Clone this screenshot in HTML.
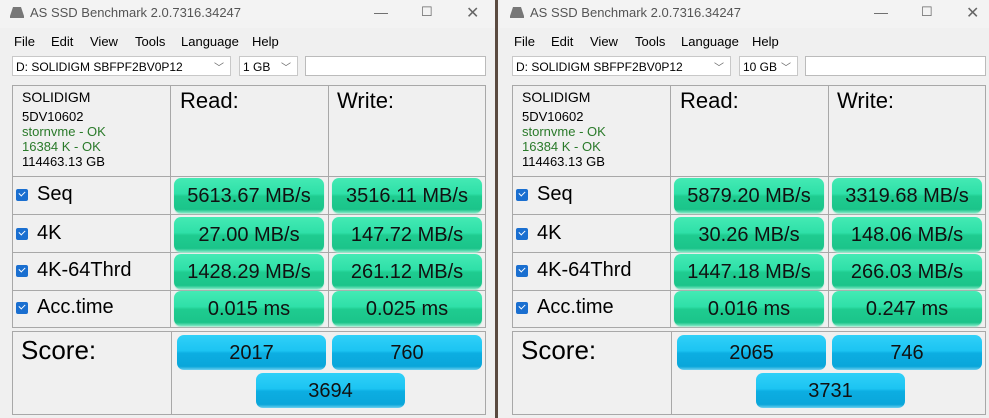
<!DOCTYPE html>
<html><head><meta charset="utf-8"><style>
*{margin:0;padding:0;box-sizing:border-box}
body{width:989px;height:418px;overflow:hidden;background:#f0f0f0;font-family:"Liberation Sans",Arial,sans-serif;position:relative}
.win{position:absolute;top:0;height:418px;background:#f0f0f0;overflow:hidden}
.sep{position:absolute;left:495px;top:0;width:3px;height:418px;background:#5a4a40}
.title{position:absolute;left:0;top:0;width:100%;height:28px;background:#f3f3f3;font-size:13px;color:#555}
.title .t{position:absolute;left:30px;top:5px}
.icon{position:absolute;left:10px;top:7px;width:14px;height:11px}
.ctl{position:absolute;top:4px;font-size:14px;color:#666}
.menu{position:absolute;left:0;top:29px;height:24px;width:100%;font-size:13px;color:#000}
.menu span{position:absolute;top:5px}
.combo{position:absolute;top:56px;height:20px;background:#fff;border:1px solid #c8c8c8;font-size:12px;padding:3px 0 0 3px}
.combo .a{position:absolute;right:6px;top:2px;font-size:10px;color:#666}
.line{position:absolute;background:#a8a8a8}
.lbl{position:absolute;font-size:20px;color:#000}
.cb{position:absolute;width:12px;height:12px;background:#1a6fd0;border-radius:2px}
.cb:after{content:"";position:absolute;left:3px;top:2px;width:5px;height:3px;border-left:1.5px solid #fff;border-bottom:1.5px solid #fff;transform:rotate(-45deg)}
.g{position:absolute;height:35px;border-radius:7px;background:linear-gradient(#44eab4 0%,#2fe0a8 45%,#1fcc90 52%,#1bc48a 90%,#7de8c4 100%);font-size:20px;text-align:center;line-height:36px;color:#111;box-shadow:0 1px 1px #9fe8cc}
.b{position:absolute;height:35px;border-radius:7px;background:linear-gradient(#30d0f8 0%,#1cc4f2 45%,#0caee2 52%,#0aa6da 90%,#6cd0f0 100%);font-size:20px;text-align:center;line-height:36px;color:#111}
.info{position:absolute;font-size:13px;line-height:14.5px}
</style></head><body>

<div class="win" style="left:0;width:495px">
<div class="title"><svg class="icon" viewBox="0 0 14 11"><path d="M3 0h8l3 9v2H0V9z" fill="#777"/></svg><span class="t">AS SSD Benchmark 2.0.7316.34247</span>
<span class="ctl" style="left:374px">—</span><span class="ctl" style="left:421px;font-size:13px">☐</span><span class="ctl" style="left:466px;font-size:16px;top:3px">✕</span></div>
<div class="menu"><span style="left:14px">File</span><span style="left:51px">Edit</span><span style="left:90px">View</span><span style="left:135px">Tools</span><span style="left:181px">Language</span><span style="left:252px">Help</span></div>
<div class="combo" style="left:12px;width:219px">D: SOLIDIGM SBFPF2BV0P12<span class="a">﹀</span></div>
<div class="combo" style="left:239px;width:59px">1 GB<span class="a">﹀</span></div>
<div class="combo" style="left:305px;width:181px;border-color:#bbb"></div>
<div class="line" style="left:12px;top:85px;width:474px;height:1px"></div>
<div class="line" style="left:12px;top:85px;width:1px;height:243px"></div>
<div class="line" style="left:485px;top:85px;width:1px;height:243px"></div>
<div class="line" style="left:170px;top:85px;width:1px;height:243px"></div>
<div class="line" style="left:328px;top:85px;width:1px;height:243px"></div>
<div class="line" style="left:12px;top:176px;width:474px;height:1px"></div>
<div class="line" style="left:12px;top:214px;width:474px;height:1px"></div>
<div class="line" style="left:12px;top:252px;width:474px;height:1px"></div>
<div class="line" style="left:12px;top:290px;width:474px;height:1px"></div>
<div class="line" style="left:12px;top:327px;width:474px;height:1px"></div>
<div class="line" style="left:12px;top:331px;width:474px;height:1px"></div>
<div class="line" style="left:12px;top:331px;width:1px;height:84px"></div>
<div class="line" style="left:485px;top:331px;width:1px;height:84px"></div>
<div class="line" style="left:171px;top:331px;width:1px;height:84px"></div>
<div class="line" style="left:12px;top:414px;width:474px;height:1px"></div>
<div class="info" style="left:22px;top:90px;font-size:14px">SOLIDIGM</div>
<div class="info" style="left:22px;top:110px">5DV10602</div>
<div class="info" style="left:22px;top:125px;color:#2a7a2a">stornvme - OK</div>
<div class="info" style="left:22px;top:140px;color:#2a7a2a">16384 K - OK</div>
<div class="info" style="left:22px;top:155px">114463.13 GB</div>
<div class="lbl" style="left:180px;top:88px;font-size:22px">Read:</div>
<div class="lbl" style="left:337px;top:88px;font-size:22px">Write:</div>
<div class="cb" style="left:16px;top:189px"></div><div class="lbl" style="left:37px;top:183px">Seq</div>
<div class="cb" style="left:16px;top:228px"></div><div class="lbl" style="left:37px;top:222px">4K</div>
<div class="cb" style="left:16px;top:265px"></div><div class="lbl" style="left:37px;top:259px">4K-64Thrd</div>
<div class="cb" style="left:16px;top:302px"></div><div class="lbl" style="left:37px;top:296px">Acc.time</div>
<div class="g" style="left:174px;top:178px;width:150px">5613.67 MB/s</div>
<div class="g" style="left:332px;top:178px;width:150px">3516.11 MB/s</div>
<div class="g" style="left:174px;top:217px;width:150px">27.00 MB/s</div>
<div class="g" style="left:332px;top:217px;width:150px">147.72 MB/s</div>
<div class="g" style="left:174px;top:254px;width:150px">1428.29 MB/s</div>
<div class="g" style="left:332px;top:254px;width:150px">261.12 MB/s</div>
<div class="g" style="left:174px;top:291px;width:150px">0.015 ms</div>
<div class="g" style="left:332px;top:291px;width:150px">0.025 ms</div>
<div class="lbl" style="left:21px;top:335px;font-size:26px">Score:</div>
<div class="b" style="left:177px;top:335px;width:149px">2017</div>
<div class="b" style="left:332px;top:335px;width:150px">760</div>
<div class="b" style="left:256px;top:373px;width:149px">3694</div>
</div>

<div class="sep"></div>

<div class="win" style="left:498px;width:491px">
<div style="position:absolute;left:2px;top:0;width:495px;height:418px">
<div class="title"><svg class="icon" viewBox="0 0 14 11"><path d="M3 0h8l3 9v2H0V9z" fill="#777"/></svg><span class="t">AS SSD Benchmark 2.0.7316.34247</span>
<span class="ctl" style="left:374px">—</span><span class="ctl" style="left:421px;font-size:13px">☐</span><span class="ctl" style="left:466px;font-size:16px;top:3px">✕</span></div>
<div class="menu"><span style="left:14px">File</span><span style="left:51px">Edit</span><span style="left:90px">View</span><span style="left:135px">Tools</span><span style="left:181px">Language</span><span style="left:252px">Help</span></div>
<div class="combo" style="left:12px;width:219px">D: SOLIDIGM SBFPF2BV0P12<span class="a">﹀</span></div>
<div class="combo" style="left:239px;width:59px">10 GB<span class="a">﹀</span></div>
<div class="combo" style="left:305px;width:181px;border-color:#bbb"></div>
<div class="line" style="left:12px;top:85px;width:474px;height:1px"></div>
<div class="line" style="left:12px;top:85px;width:1px;height:243px"></div>
<div class="line" style="left:485px;top:85px;width:1px;height:243px"></div>
<div class="line" style="left:170px;top:85px;width:1px;height:243px"></div>
<div class="line" style="left:328px;top:85px;width:1px;height:243px"></div>
<div class="line" style="left:12px;top:176px;width:474px;height:1px"></div>
<div class="line" style="left:12px;top:214px;width:474px;height:1px"></div>
<div class="line" style="left:12px;top:252px;width:474px;height:1px"></div>
<div class="line" style="left:12px;top:290px;width:474px;height:1px"></div>
<div class="line" style="left:12px;top:327px;width:474px;height:1px"></div>
<div class="line" style="left:12px;top:331px;width:474px;height:1px"></div>
<div class="line" style="left:12px;top:331px;width:1px;height:84px"></div>
<div class="line" style="left:485px;top:331px;width:1px;height:84px"></div>
<div class="line" style="left:171px;top:331px;width:1px;height:84px"></div>
<div class="line" style="left:12px;top:414px;width:474px;height:1px"></div>
<div class="info" style="left:22px;top:90px;font-size:14px">SOLIDIGM</div>
<div class="info" style="left:22px;top:110px">5DV10602</div>
<div class="info" style="left:22px;top:125px;color:#2a7a2a">stornvme - OK</div>
<div class="info" style="left:22px;top:140px;color:#2a7a2a">16384 K - OK</div>
<div class="info" style="left:22px;top:155px">114463.13 GB</div>
<div class="lbl" style="left:180px;top:88px;font-size:22px">Read:</div>
<div class="lbl" style="left:337px;top:88px;font-size:22px">Write:</div>
<div class="cb" style="left:16px;top:189px"></div><div class="lbl" style="left:37px;top:183px">Seq</div>
<div class="cb" style="left:16px;top:228px"></div><div class="lbl" style="left:37px;top:222px">4K</div>
<div class="cb" style="left:16px;top:265px"></div><div class="lbl" style="left:37px;top:259px">4K-64Thrd</div>
<div class="cb" style="left:16px;top:302px"></div><div class="lbl" style="left:37px;top:296px">Acc.time</div>
<div class="g" style="left:174px;top:178px;width:150px">5879.20 MB/s</div>
<div class="g" style="left:332px;top:178px;width:150px">3319.68 MB/s</div>
<div class="g" style="left:174px;top:217px;width:150px">30.26 MB/s</div>
<div class="g" style="left:332px;top:217px;width:150px">148.06 MB/s</div>
<div class="g" style="left:174px;top:254px;width:150px">1447.18 MB/s</div>
<div class="g" style="left:332px;top:254px;width:150px">266.03 MB/s</div>
<div class="g" style="left:174px;top:291px;width:150px">0.016 ms</div>
<div class="g" style="left:332px;top:291px;width:150px">0.247 ms</div>
<div class="lbl" style="left:21px;top:335px;font-size:26px">Score:</div>
<div class="b" style="left:177px;top:335px;width:149px">2065</div>
<div class="b" style="left:332px;top:335px;width:150px">746</div>
<div class="b" style="left:256px;top:373px;width:149px">3731</div>
</div>
</div>
</body></html>
